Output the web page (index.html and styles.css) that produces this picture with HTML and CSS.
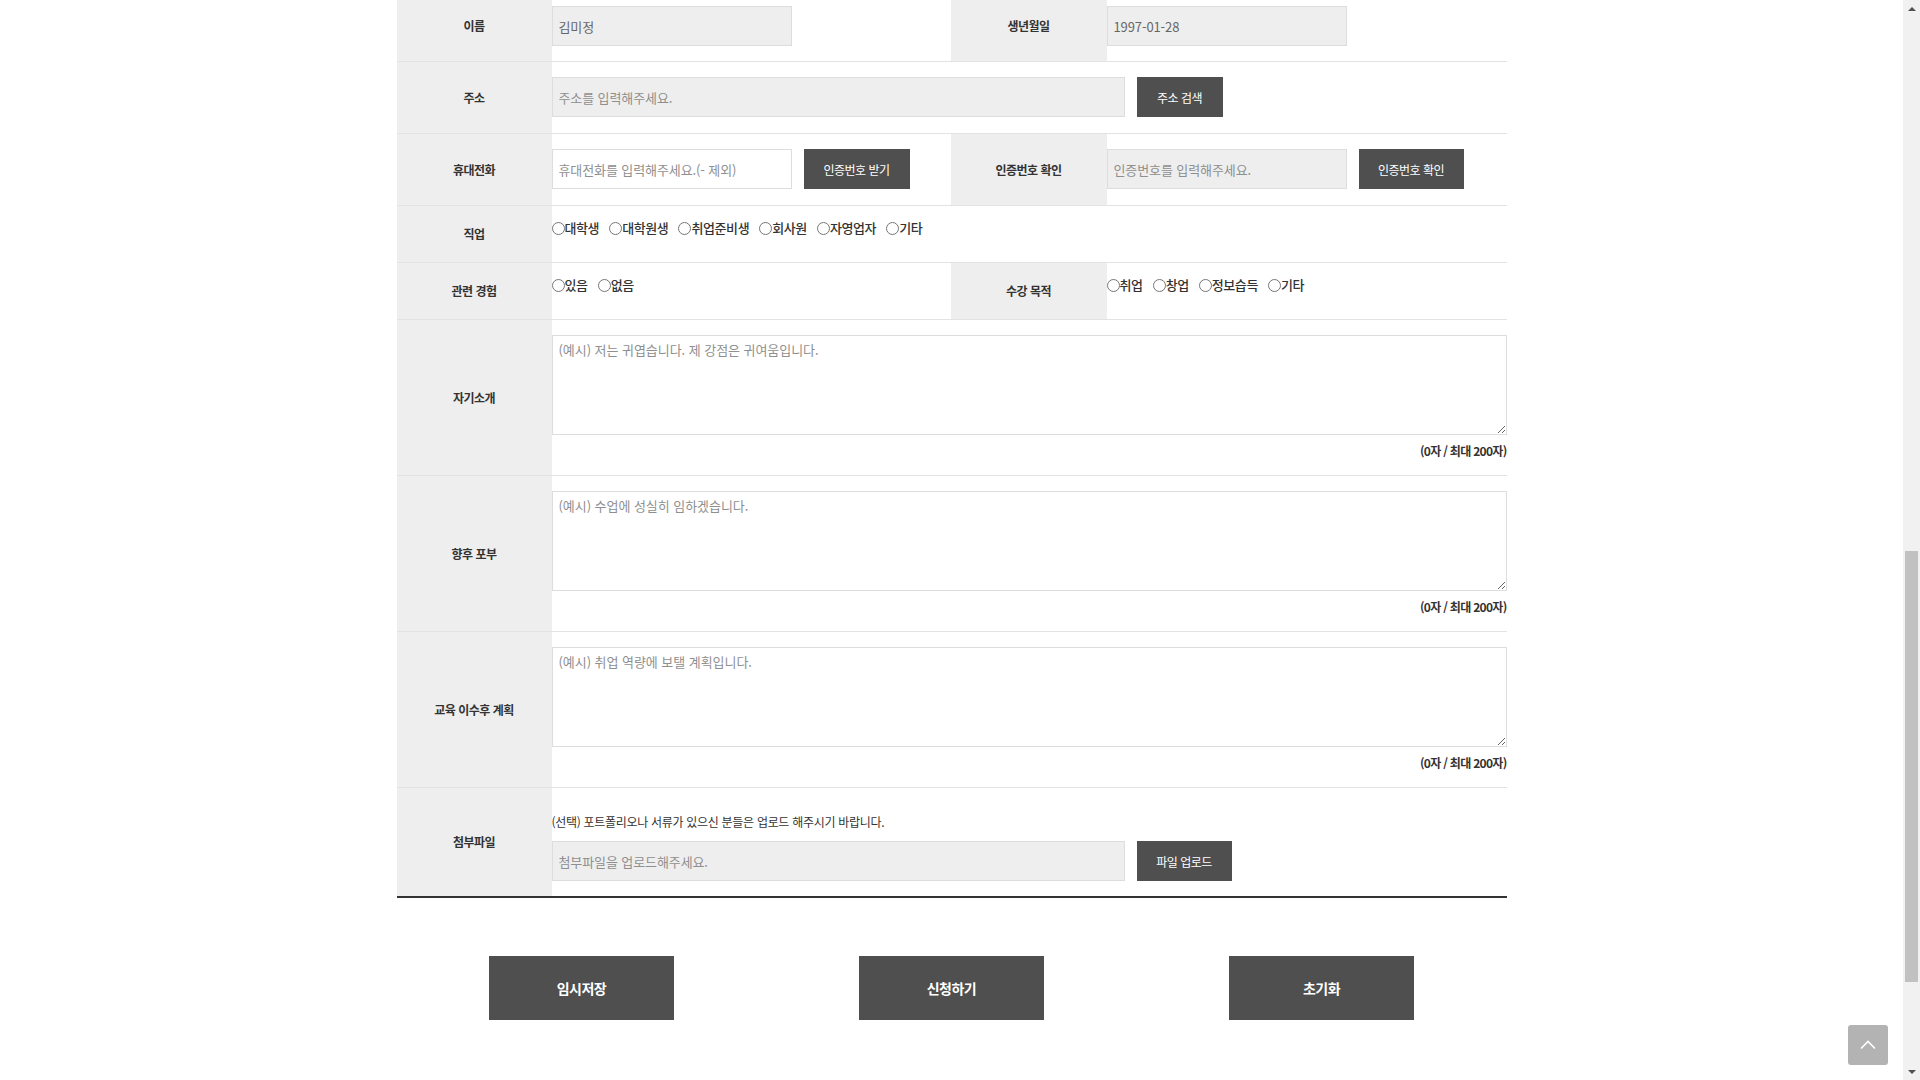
FILE: index.html
```html
<!DOCTYPE html>
<html lang="ko">
<head>
<meta charset="utf-8">
<title>수강 신청서</title>
<link rel="stylesheet" href="styles.css">
</head>
<body>
<div class="screen">
  <main class="page">
    <div class="wrap">
      <table class="form">
        <colgroup>
          <col class="c-lab"><col class="c-dat1"><col class="c-lab2"><col class="c-dat2">
        </colgroup>
        <tbody>
          <tr>
            <th>이름</th>
            <td><input class="inp" type="text" value="김미정" readonly></td>
            <th>생년월일</th>
            <td><input class="inp" type="text" value="1997-01-28" readonly></td>
          </tr>
          <tr>
            <th>주소</th>
            <td colspan="3">
              <div class="field">
                <input class="inp inp-addr" type="text" placeholder="주소를 입력해주세요." readonly>
                <button class="btn-sm w86" type="button">주소 검색</button>
              </div>
            </td>
          </tr>
          <tr>
            <th>휴대전화</th>
            <td>
              <div class="field">
                <input class="inp inp-white" type="text" placeholder="휴대전화를 입력해주세요.(- 제외)">
                <button class="btn-sm w106" type="button">인증번호 받기</button>
              </div>
            </td>
            <th>인증번호 확인</th>
            <td>
              <div class="field">
                <input class="inp" type="text" placeholder="인증번호를 입력해주세요." readonly>
                <button class="btn-sm w105" type="button">인증번호 확인</button>
              </div>
            </td>
          </tr>
          <tr>
            <th>직업</th>
            <td colspan="3">
              <div class="radios">
                <label class="radio"><input type="radio" name="job">대학생</label>
                <label class="radio"><input type="radio" name="job">대학원생</label>
                <label class="radio"><input type="radio" name="job">취업준비생</label>
                <label class="radio"><input type="radio" name="job">회사원</label>
                <label class="radio"><input type="radio" name="job">자영업자</label>
                <label class="radio"><input type="radio" name="job">기타</label>
              </div>
            </td>
          </tr>
          <tr>
            <th>관련 경험</th>
            <td>
              <div class="radios">
                <label class="radio"><input type="radio" name="exp">있음</label>
                <label class="radio"><input type="radio" name="exp">없음</label>
              </div>
            </td>
            <th>수강 목적</th>
            <td>
              <div class="radios">
                <label class="radio"><input type="radio" name="goal">취업</label>
                <label class="radio"><input type="radio" name="goal">창업</label>
                <label class="radio"><input type="radio" name="goal">정보습득</label>
                <label class="radio"><input type="radio" name="goal">기타</label>
              </div>
            </td>
          </tr>
          <tr>
            <th>자기소개</th>
            <td colspan="3">
              <textarea class="ta" placeholder="(예시) 저는 귀엽습니다. 제 강점은 귀여움입니다."></textarea>
              <p class="count">(0자 / 최대 200자)</p>
            </td>
          </tr>
          <tr>
            <th>향후 포부</th>
            <td colspan="3">
              <textarea class="ta" placeholder="(예시) 수업에 성실히 임하겠습니다."></textarea>
              <p class="count">(0자 / 최대 200자)</p>
            </td>
          </tr>
          <tr>
            <th>교육 이수후 계획</th>
            <td colspan="3">
              <textarea class="ta" placeholder="(예시) 취업 역량에 보탤 계획입니다."></textarea>
              <p class="count">(0자 / 최대 200자)</p>
            </td>
          </tr>
          <tr class="last">
            <th>첨부파일</th>
            <td colspan="3">
              <p class="notice">(선택) 포트폴리오나 서류가 있으신 분들은 업로드 해주시기 바랍니다.</p>
              <div class="field">
                <input class="inp inp-addr" type="text" placeholder="첨부파일을 업로드해주세요." readonly>
                <button class="btn-sm w95" type="button">파일 업로드</button>
              </div>
            </td>
          </tr>
        </tbody>
      </table>

      <div class="actions">
        <div class="act"><button class="btn-lg" type="button">임시저장</button></div>
        <div class="act"><button class="btn-lg" type="button">신청하기</button></div>
        <div class="act"><button class="btn-lg" type="button">초기화</button></div>
      </div>
    </div>
  </main>

  <div class="sb">
    <div class="sb-arrow"><span class="tri tri-up"></span></div>
    <div class="sb-track" style="padding-top:534px"><div class="sb-thumb"></div></div>
    <div class="sb-arrow"><span class="tri tri-down"></span></div>
  </div>
</div>

<a class="to-top" href="#" aria-label="맨 위로">
  <svg width="16" height="10" viewBox="0 0 16 10"><path d="M1 8.5 L8 1.5 L15 8.5" fill="none" stroke="#fff" stroke-width="1.6"/></svg>
</a>
</body>
</html>
```

FILE: styles.css
```css
* { box-sizing: border-box; }
html, body { margin: 0; padding: 0; height: 100%; }
body {
  font-family: "Noto Sans CJK KR", "Noto Sans", sans-serif;
  color: #333;
  background: #fff;
  overflow: hidden;
}
.screen { display: flex; height: 100vh; overflow: hidden; }
.page { flex: 1; min-width: 0; }
.wrap { width: 1110px; margin: -9px auto 0; }

.form {
  width: 100%;
  border-collapse: collapse;
  table-layout: fixed;
  border-bottom: 2px solid #333;
}
.c-lab { width: 155px; }
.c-dat1 { width: 399px; }
.c-lab2 { width: 156px; }
.c-dat2 { width: 400px; }

.form th {
  background: #eee;
  font-size: 12px;
  font-weight: 700;
  line-height: 16px;
  letter-spacing: -0.5px;
  text-align: center;
  vertical-align: middle;
  padding: 20px 6px;
  border-bottom: 1px solid #e3e3e3;
  color: #333;
}
.form td {
  padding: 15px 0 16px;
  vertical-align: top;
  border-bottom: 1px solid #e3e3e3;
}
.form tr:first-child td { padding-bottom: 15px; }
.form tr.last td { padding-bottom: 15px; }

.field { display: flex; align-items: center; gap: 12px; }

.inp {
  display: block;
  width: 240px;
  height: 40px;
  border: 1px solid #ddd;
  background: #eee;
  padding: 0 6px;
  font-family: inherit;
  font-size: 13px;
  letter-spacing: -0.1px;
  color: #666;
  outline: none;
}
.inp::placeholder { color: #8f8f8f; }
.inp-white { background: #fff; }
.inp-addr { width: 573px; }

.btn-sm {
  height: 40px;
  border: 0;
  background: #4f4f4f;
  color: #fff;
  font-family: inherit;
  font-size: 12px;
  letter-spacing: -0.5px;
  padding: 0;
}
.w86 { width: 86px; }
.w95 { width: 95px; }
.w105 { width: 105px; }
.w106 { width: 106px; }

.radios {
  display: flex;
  align-items: center;
  line-height: 14px;
}
.radio {
  display: inline-flex;
  align-items: center;
  margin-right: 10px;
  font-size: 13px;
  font-weight: 500;
  letter-spacing: -0.4px;
  color: #333;
}
.radio input { margin: 0; width: 13px; height: 13px; }

.ta {
  display: block;
  width: 100%;
  height: 100px;
  border: 1px solid #ddd;
  padding: 5px 6px;
  font-family: inherit;
  font-size: 13px;
  line-height: 18px;
  letter-spacing: -0.05px;
  resize: vertical;
  outline: none;
}
.ta::placeholder { color: #8f8f8f; }

.count {
  margin: 8px 0 0;
  text-align: right;
  font-size: 12px;
  font-weight: 700;
  line-height: 16px;
  letter-spacing: -0.7px;
  color: #333;
}
.notice {
  margin: 11px 0 11px;
  font-size: 12px;
  line-height: 16px;
  letter-spacing: -0.3px;
  color: #333;
}

.actions {
  display: grid;
  grid-template-columns: repeat(3, 1fr);
  margin-top: 58px;
}
.act { display: flex; justify-content: center; }
.btn-lg {
  width: 185px;
  height: 64px;
  border: 0;
  background: #4f4f4f;
  color: #fff;
  font-family: inherit;
  font-size: 14px;
  font-weight: 700;
  letter-spacing: -0.5px;
}

/* fake window scrollbar */
.sb {
  flex: none;
  width: 17px;
  background: #f1f1f1;
  display: flex;
  flex-direction: column;
}
.sb-arrow { height: 17px; display: flex; align-items: center; justify-content: center; flex: none; }
.sb-track { flex: 1; }
.sb-thumb { height: 431px; margin: 0 2px; background: #c1c1c1; }
.tri { width: 0; height: 0; border-left: 4px solid transparent; border-right: 4px solid transparent; }
.tri-up { border-bottom: 4px solid #505050; }
.tri-down { border-top: 4px solid #505050; }

.to-top {
  position: fixed;
  left: 1848px;
  top: 1025px;
  width: 40px;
  height: 40px;
  border-radius: 3px;
  background: #b3b3b3;
  display: flex;
  align-items: center;
  justify-content: center;
}
```
